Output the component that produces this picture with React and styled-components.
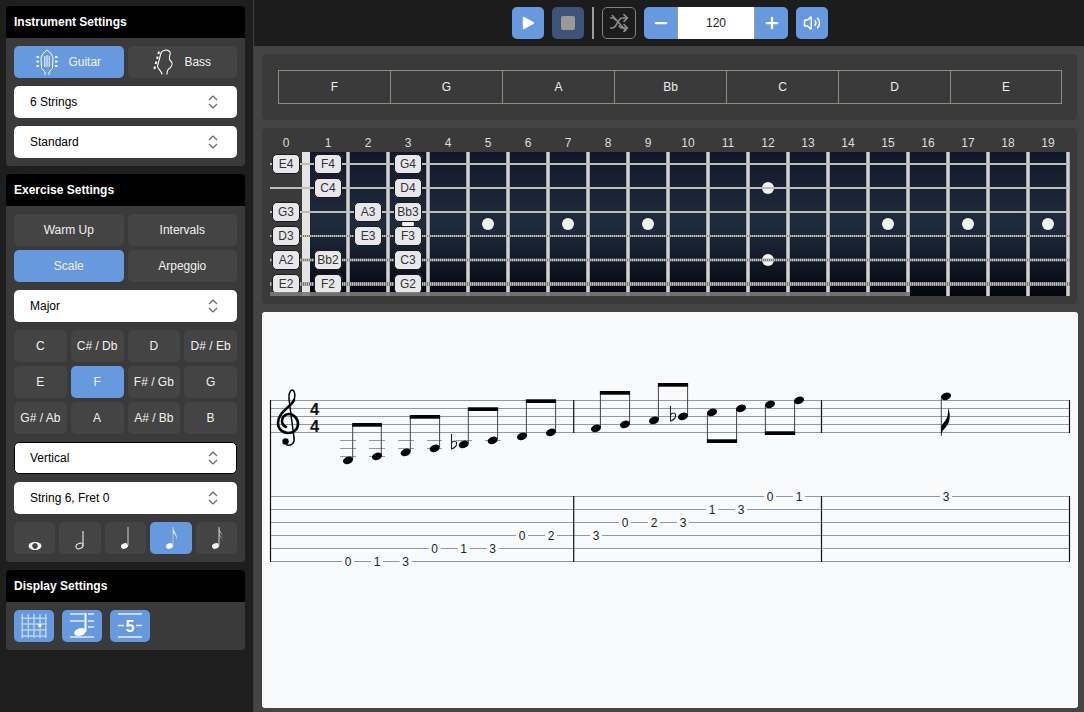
import styled, { createGlobalStyle } from 'styled-components';
import { ChevronsUpDown, Minus, Plus, Volume2 } from 'lucide-react';

const BLUE = '#6699dd';
const KEYS = ['C', 'C# / Db', 'D', 'D# / Eb', 'E', 'F', 'F# / Gb', 'G', 'G# / Ab', 'A', 'A# / Bb', 'B'];
const CHORDS = ['F', 'G', 'A', 'Bb', 'C', 'D', 'E'];
const FRETS = Array.from({ length: 20 }, (_, i) => i);
const WIRES = Array.from({ length: 19 }, (_, i) => 348 + i * 40);
const DOTS = [[408, 224], [488, 224], [568, 224], [648, 224], [768, 188], [768, 260], [888, 224], [968, 224], [1048, 224]];
const FRET_NOTES = [
  ['E4', 1, 0], ['F4', 1, 1], ['G4', 1, 3],
  ['C4', 2, 1], ['D4', 2, 3],
  ['G3', 3, 0], ['A3', 3, 2], ['Bb3', 3, 3],
  ['D3', 4, 0], ['E3', 4, 2], ['F3', 4, 3],
  ['A2', 5, 0], ['Bb2', 5, 1], ['C3', 5, 3],
  ['E2', 6, 0], ['F2', 6, 1], ['G2', 6, 3],
];

const STAFF_LINES = [400.5, 408.5, 416.5, 424.5, 432.5];
const TAB_LINES = [496.5, 509.5, 522.5, 535.5, 548.5, 561.5];
const BARS = [573.7, 821.5, 1069.5];
const HEADS = [
  [348, 460.3], [377, 456.3], [405.7, 452.3], [434.7, 448.3], [463.7, 444.3], [492.7, 440.3], [522, 436.3], [551, 432.3],
  [596, 428.3], [625, 424.3], [654, 420.3], [683, 416.3], [712, 412.3], [741, 408.3], [770, 404.3], [799, 400.3], [946, 396.3],
];
// x of both stems, y of beam top, stem ends measured from the heads
const BEAMS = [
  { a: 352.7, b: 381.3, y: 423, ya: 459, yb: 455 },
  { a: 410.3, b: 439.6, y: 415, ya: 451, yb: 447 },
  { a: 468.3, b: 497.6, y: 407.3, ya: 443, yb: 439 },
  { a: 526.4, b: 555.6, y: 399.3, ya: 435, yb: 431 },
  { a: 600.4, b: 629.6, y: 391, ya: 427, yb: 423 },
  { a: 658.4, b: 687.6, y: 383, ya: 419, yb: 415 },
  { a: 707.4, b: 736.6, y: 439.3, ya: 413, yb: 409 },
  { a: 765.4, b: 794.6, y: 431.3, ya: 405, yb: 401 },
];
const LEDGERS = [
  [340, 356, 440.5], [340, 356, 448.5], [340, 356, 456.5],
  [369, 385, 440.5], [369, 385, 448.5], [369, 385, 456.5],
  [398, 414, 440.5], [398, 414, 448.5],
  [427, 442, 440.5], [427, 442, 448.5],
  [456, 472, 440.5], [485, 501, 440.5],
];
const TAB_NUMBERS = [
  [348, 561.5, 0], [377, 561.5, 1], [405.7, 561.5, 3],
  [434.7, 548.5, 0], [463.7, 548.5, 1], [492.7, 548.5, 3],
  [522, 535.5, 0], [551, 535.5, 2], [596, 535.5, 3],
  [625, 522.5, 0], [654, 522.5, 2], [683, 522.5, 3],
  [712, 509.5, 1], [741, 509.5, 3],
  [770, 496.5, 0], [799, 496.5, 1], [946, 496.5, 3],
];

const GlobalStyle = createGlobalStyle`
  html, body, #root {
    height: 100%;
    margin: 0;
  }
  body {
    overflow: hidden;
    font-family: "Liberation Sans", Arial, sans-serif;
    font-size: 12px;
    background: #1e1e1e;
  }
`;

const Layout = styled.div`
  height: 100%;
  display: flex;
`;

const Sidebar = styled.aside`
  width: 254px;
  flex-shrink: 0;
  box-sizing: border-box;
  padding: 6px 8px 0 6px;
  display: flex;
  flex-direction: column;
  gap: 8px;
  background: #1e1e1e;
  border-right: 1px solid #33414f;
`;

const Panel = styled.section`
  background: #3a3a3a;
  border-radius: 4px;
  overflow: hidden;
`;

const PanelHeader = styled.h2`
  margin: 0;
  height: 32px;
  padding: 0 8px;
  display: flex;
  align-items: center;
  background: #000;
  color: #fff;
  font-size: 12px;
  font-weight: bold;
`;

const PanelBody = styled.div`
  padding: 8px;
  display: flex;
  flex-direction: column;
  gap: 8px;
`;

const ButtonStack = styled.div`
  display: flex;
  flex-direction: column;
  gap: 4px;
`;

const Grid = styled.div`
  display: grid;
  grid-template-columns: repeat(${(p) => p.$cols}, 1fr);
  gap: 4px;
`;

const ToggleButton = styled.button`
  height: 32px;
  padding: 0;
  border: none;
  border-radius: 5px;
  display: flex;
  align-items: center;
  justify-content: center;
  gap: ${(p) => p.$gap || 0}px;
  background: ${(p) => (p.$active ? BLUE : '#444')};
  color: #f2f2f2;
  font-family: inherit;
  font-size: 12px;
`;

const IconRow = styled.div`
  display: flex;
  gap: 8px;
`;

const DisplayButton = styled(ToggleButton)`
  width: 40px;
`;

const SelectBox = styled.div`
  position: relative;
  height: 32px;
  & svg {
    position: absolute;
    top: 7px;
    right: 15px;
    color: #666;
    pointer-events: none;
  }
`;

const Select = styled.select`
  width: 100%;
  height: 100%;
  padding: 0 0 0 15px;
  appearance: none;
  box-sizing: border-box;
  border: 1px solid ${(p) => (p.$focused ? '#000' : 'transparent')};
  border-radius: 5px;
  background: #fff;
  color: #000;
  font-family: inherit;
  font-size: 12px;
`;

const Main = styled.main`
  flex: 1;
  min-width: 0;
  display: flex;
  flex-direction: column;
  background: #444;
`;

const Toolbar = styled.header`
  height: 46px;
  flex-shrink: 0;
  box-sizing: border-box;
  padding-left: 2px;
  display: flex;
  align-items: center;
  justify-content: center;
  gap: 8px;
  background: #1c1c1c;
`;

const ToolButton = styled.button`
  width: 32px;
  height: 32px;
  padding: 0;
  border: none;
  border-radius: 5px;
  display: flex;
  align-items: center;
  justify-content: center;
  background: ${(p) => (p.$dim ? '#3c5478' : BLUE)};
  color: #fff;
`;

const StopSquare = styled.span`
  width: 14px;
  height: 14px;
  border-radius: 2px;
  background: #999;
`;

const Divider = styled.span`
  width: 2px;
  height: 32px;
  background: #9c9c9c;
`;

const LoopButton = styled(ToolButton)`
  width: 34px;
  background: transparent;
  border: 1px solid #808080;
  color: #8c8c8c;
`;

const TempoGroup = styled.div`
  display: flex;
  width: 144px;
  height: 32px;
  border-radius: 5px;
  overflow: hidden;
  background: ${BLUE};
`;

const TempoStep = styled.button`
  flex: 1;
  padding: 0;
  border: none;
  display: flex;
  align-items: center;
  justify-content: center;
  background: transparent;
  color: #fff;
`;

const TempoInput = styled.input`
  width: 78px;
  box-sizing: border-box;
  padding: 0;
  border: none;
  border-left: 1px solid #999;
  border-right: 1px solid #999;
  background: #fff;
  color: #222;
  text-align: center;
  font-family: inherit;
  font-size: 12px;
`;

const Content = styled.div`
  flex: 1;
  min-height: 0;
  padding: 8px 6px 4px 8px;
  display: flex;
  flex-direction: column;
  gap: 8px;
`;

const ChordPanel = styled.section`
  margin-right: 1px;
  padding: 16px;
  background: #3a3a3a;
  border-radius: 4px;
`;

const ChordGrid = styled.div`
  width: 784px;
  height: 34px;
  box-sizing: border-box;
  display: grid;
  grid-template-columns: repeat(7, 112px);
  border-top: 1px solid #8f8f78;
  border-bottom: 1px solid #8f8f78;
`;

const ChordCell = styled.div`
  box-sizing: border-box;
  display: flex;
  align-items: center;
  justify-content: center;
  color: #eee;
  font-size: 12px;
  border-left: 1px solid #8f8f78;
  &:last-child {
    border-right: 1px solid #8f8f78;
  }
`;

const FretPanel = styled.section`
  margin-right: 1px;
  padding: 8px 7px 8px 8px;
  background: #3a3a3a;
  border-radius: 4px;
`;

const fretColumns = '32px 6px repeat(19, 40px)';

const FretLabels = styled.div`
  height: 16px;
  display: grid;
  grid-template-columns: ${fretColumns};
`;

const FretLabel = styled.span`
  grid-column: ${(p) => (p.$fret === 0 ? 1 : p.$fret + 2)};
  grid-row: 1;
  text-align: center;
  color: #ddd;
  font-size: 12px;
  line-height: 14px;
`;

const Board = styled.div`
  position: relative;
  width: 800px;
  height: 144px;
  overflow: hidden;
`;

const BoardArt = styled.svg`
  position: absolute;
  inset: 0;
  display: block;
`;

const NoteGrid = styled.div`
  position: relative;
  display: grid;
  grid-template-columns: ${fretColumns};
  grid-template-rows: repeat(6, 24px);
`;

const NotePill = styled.div`
  grid-row: ${(p) => p.$row};
  grid-column: ${(p) => (p.$fret === 0 ? 1 : p.$fret + 2)};
  justify-self: center;
  align-self: center;
  width: 28px;
  height: 20px;
  box-sizing: border-box;
  display: flex;
  align-items: center;
  justify-content: center;
  border: 1px solid #1a1a1a;
  border-radius: 5px;
  background: #e8e8ec;
  color: #333;
  font-size: 12px;
`;

const ScrollThumb = styled.div`
  position: absolute;
  left: 0;
  bottom: 0;
  width: 640px;
  height: 4px;
  background: rgba(122, 122, 122, 0.92);
`;

const Sheet = styled.section`
  flex: 1;
  min-height: 0;
  background: #f9fafc;
  border-radius: 3px;
  overflow: hidden;
`;

const SheetArt = styled.svg`
  display: block;
  width: 100%;
  height: 100%;
`;

const TabDigit = styled.text`
  font-family: "Liberation Sans", Arial, sans-serif;
  font-size: 12px;
  fill: #222;
  text-anchor: middle;
`;

const TimeDigit = styled.text`
  font-family: "Liberation Sans", Arial, sans-serif;
  font-weight: bold;
  font-size: 16.5px;
  fill: #111;
  text-anchor: middle;
`;

const IconDigit = styled.text`
  font-family: "Liberation Sans", Arial, sans-serif;
  font-weight: bold;
  font-size: 16px;
  fill: #fff;
  text-anchor: middle;
`;

const PickSelect = ({ value, focused }) => (
  <SelectBox>
    <Select defaultValue={value} $focused={focused}>
      <option>{value}</option>
    </Select>
    <ChevronsUpDown size={18} strokeWidth={1.5} />
  </SelectBox>
);

const GuitarIcon = () => (
  <svg width="22" height="26" viewBox="0 0 22 26" fill="none" stroke="#fff" strokeWidth="1" strokeLinecap="round">
    <path d="M9 25.5V23L5.6 19.5 5 8.5 7 4.5 11 1l4 3.5 2 4-.6 11L13 23v2.500" />
    <path d="M8.800 7.500v10M11 6.500v11M13.200 7.500v10" />
    <path strokeWidth="2" strokeLinecap="butt" d="M0.500 8h2.400M0.500 12.500h2.400M0.500 17h2.400M19.100 8h2.400M19.100 12.500h2.400M19.100 17h2.400" />
  </svg>
);

const BassIcon = () => (
  <svg width="20" height="26" viewBox="0 0 20 26" fill="none" stroke="#fff" strokeWidth="1.100" strokeLinecap="round">
    <path d="M8 4C9 1 15 0 17 3c1 3-2 6 0 8 3 3 3 5 0 8-2 1-3 3-3 6M8 4 4.500 17c0 3 3.500 4 4.500 8" />
    <path strokeWidth="2" strokeLinecap="butt" d="M6 2.500l-.6 2.400M4.700 7.500l-.6 2.400M3.300 12.500l-.6 2.400M2 17.500l-.6 2.400" />
  </svg>
);

// Whole, half, quarter, eighth and sixteenth note, all on one baseline
const NoteIcon = ({ kind }) => {
  const hollow = kind === 'half';
  return (
    <svg width="41" height="32" viewBox="0 0 41 32">
      {kind === 'whole' ? (
        <>
          <ellipse cx="21" cy="24" rx="6.500" ry="4" fill="#fff" />
          <ellipse cx="21" cy="24" rx="2.800" ry="2.700" fill="#444" transform="rotate(50 21 24)" />
        </>
      ) : (
        <>
          <ellipse cx="19.500" cy="24" rx="3.600" ry="2.600" transform="rotate(-22 19.500 24)"
            fill={hollow ? 'none' : '#fff'} stroke="#fff" strokeWidth={hollow ? 1 : 0} />
          <path d={`M23 23.500V${hollow ? 9 : 5}`} stroke={hollow ? '#ddd' : '#bbb'} strokeWidth="1.200" />
        </>
      )}
      {kind === 'eighth' && <path d="M23 5c0 4 5 7 4 14 0-4-2-7-4-8z" fill="#d8e4f6" />}
      {kind === 'sixteenth' && <path d="M23 5c0 4 4 6 3.500 11 0-3-1.500-5-3.500-6zM23 10c0 4 4 5 3.500 10 0-3-1.500-5-3.500-6z" fill="#bbb" />}
    </svg>
  );
};

const FretboardIcon = () => (
  <svg width="40" height="32" viewBox="0 0 40 32" stroke="rgba(255,255,255,0.55)" strokeWidth="1.500">
    <path d="M8.300 4v24M14.300 4v24M20 4v24M26 4v24M31.700 4v24M7 8.300h26M7 14h26M7 20h26M7 26h26" fill="none" />
    <rect x="24.300" y="14" width="3" height="3" fill="#fff" stroke="none" />
  </svg>
);

const StaffIcon = () => (
  <svg width="40" height="32" viewBox="0 0 40 32" stroke="#fff" strokeWidth="1.300" fill="none">
    <path d="M8 4h14M26 4h6M8 11h14M26 11h6M26 17h6M8 27h24" stroke="rgba(255,255,255,0.8)" />
    <ellipse cx="18" cy="22" rx="6" ry="3.800" fill="#fff" stroke="none" transform="rotate(-18 18 22)" />
    <path d="M23.500 22V3" strokeWidth="2" />
  </svg>
);

const TabIcon = () => (
  <svg width="40" height="32" viewBox="0 0 40 32" stroke="rgba(255,255,255,0.85)" strokeWidth="1.300" fill="none">
    <path d="M8 4h24M8 27h24M8 15.500h6M26 15.500h6" />
    <IconDigit x="20" y="21.500" stroke="none">5</IconDigit>
  </svg>
);

const PlayIcon = () => (
  <svg width="16" height="16" viewBox="0 0 16 16">
    <path d="M3.500 2.500 13.500 8 3.500 13.500z" fill="#fff" stroke="#fff" strokeWidth="1.500" strokeLinejoin="round" />
  </svg>
);

const NoLoopIcon = () => (
  <svg width="20" height="20" viewBox="0 0 24 24" fill="none" stroke="currentColor" strokeWidth="2" strokeLinecap="round" strokeLinejoin="round">
    <path d="m18 14 4 4-4 4M18 2l4 4-4 4" />
    <path d="M2 18h2a4 4 0 0 0 3.300-1.700l5.400-8.600A4 4 0 0 1 16 6h6" />
    <path d="M2 6h2a4 4 0 0 1 3.600 2.200M22 18h-6a4 4 0 0 1-3.300-1.800l-.4-.4" />
    <path d="M4 3l16 18" />
  </svg>
);

const BoardDrawing = () => (
  <BoardArt width="800" height="144" viewBox="270 152 800 144">
    <defs>
      <linearGradient id="wood" x1="0" y1="0" x2="0" y2="1">
        <stop offset="0" stopColor="#121829" />
        <stop offset="0.5" stopColor="#1f2b3d" />
        <stop offset="0.72" stopColor="#141c2b" />
        <stop offset="1" stopColor="#03050c" />
      </linearGradient>
      <linearGradient id="wire" x1="0" y1="0" x2="1" y2="0">
        <stop offset="0" stopColor="#8c8c8c" />
        <stop offset="0.5" stopColor="#ececec" />
        <stop offset="1" stopColor="#8c8c8c" />
      </linearGradient>
    </defs>
    <rect x="310" y="152" width="760" height="144" fill="url(#wood)" />
    <rect x="302" y="152" width="8" height="144" fill="#e4e4e0" />
    {WIRES.map((x) => (
      <rect key={x} x={x - 2} y="152" width="4" height="144" fill="url(#wire)" />
    ))}
    {DOTS.map(([x, y]) => (
      <circle key={`${x}-${y}`} cx={x} cy={y} r="6" fill="#f2f2f2" />
    ))}
    <path d="M270 164H1070M270 188H1070M270 212H1070" stroke="#bdbdbd" strokeWidth="2" />
    <path d="M270 236H1070" stroke="#777" strokeWidth="2" />
    <path d="M270 236H1070" stroke="#c2c2c2" strokeWidth="2" strokeDasharray="1 1" />
    <path d="M270 260H1070" stroke="#777" strokeWidth="2.500" />
    <path d="M270 260H1070" stroke="#c2c2c2" strokeWidth="2.500" strokeDasharray="1 1" />
    <path d="M270 284H1070" stroke="#707070" strokeWidth="3.500" />
    <path d="M270 284H1070" stroke="#bebebe" strokeWidth="3.500" strokeDasharray="1 1" />
  </BoardArt>
);

const Flat = ({ x, y }) => (
  <path d={`M${x} ${y}v15c3-1 5.500-3.500 5-6.500-.5-2-3-2-5 .5`} fill="none" stroke="#222" strokeWidth="1.100" />
);

const TrebleClef = () => (
  <g fill="none" stroke="#000" strokeLinecap="round">
    <path strokeWidth="1.500" d="M294 438 289 399C288.500 394 290 390 292.500 390 295 391 295.500 396 294 400" />
    <path strokeWidth="2.600" d="M294 400C292 406 278 412 278 423 278 430 284 433 288 433 294 433 298 429 298 424 298 418 293 414 289 414 284 414 282 418 282 421 282 424 284 426 286 427" />
    <path strokeWidth="1.500" d="M294 438C295 444 290 446 287 445" />
    <circle cx="285.500" cy="441.500" r="3.200" fill="#000" stroke="none" />
  </g>
);

const NotationDrawing = () => (
  <SheetArt viewBox="262 312 816 396">
    <g stroke="#8f9aa8" strokeWidth="1">
      {STAFF_LINES.map((y) => <line key={y} x1="270" x2="1070" y1={y} y2={y} />)}
      {TAB_LINES.map((y) => <line key={y} x1="270" x2="1070" y1={y} y2={y} />)}
      {LEDGERS.map(([a, b, y]) => <line key={`${a}-${y}`} x1={a} x2={b} y1={y} y2={y} />)}
    </g>
    <g stroke="#111" strokeWidth="1.200">
      <line x1="270.500" x2="270.500" y1="400" y2="562" />
      {BARS.map((x) => (
        <g key={x}>
          <line x1={x} x2={x} y1="400" y2="433" />
          <line x1={x} x2={x} y1="496" y2="562" />
        </g>
      ))}
    </g>
    <TrebleClef />
    <TimeDigit x="314.500" y="415">4</TimeDigit>
    <TimeDigit x="314.500" y="432">4</TimeDigit>
    {BEAMS.map(({ a, b, y, ya, yb }) => (
      <g key={a}>
        <line x1={a} x2={a} y1={ya} y2={y + 2} stroke="#444" strokeWidth="1" />
        <line x1={b} x2={b} y1={yb} y2={y + 2} stroke="#444" strokeWidth="1" />
        <rect x={a - 0.5} y={y} width={b - a + 1} height="3.700" fill="#000" />
      </g>
    ))}
    {HEADS.map(([x, y]) => (
      <ellipse key={x} cx={x} cy={y} rx="5.200" ry="3.600" fill="#000" transform={`rotate(-20 ${x} ${y})`} />
    ))}
    <Flat x={451.500} y={434} />
    <Flat x={670.500} y={406} />
    <line x1="941.300" x2="941.300" y1="397" y2="436" stroke="#444" strokeWidth="1" />
    <path d="M941 435C942 430 946 428 948.500 423 950.500 418 950 412 948 408 948.500 413 947.500 418 945 421 943.500 423 941.500 425 941 427z" fill="#000" />
    {TAB_NUMBERS.map(([x, y, n]) => (
      <g key={x}>
        <rect x={x - 6} y={y - 4} width="12" height="8" fill="#f9fafc" />
        <TabDigit x={x} y={y + 4}>{n}</TabDigit>
      </g>
    ))}
  </SheetArt>
);

const App = () => (
  <>
    <GlobalStyle />
    <Layout>
      <Sidebar>
        <Panel>
          <PanelHeader>Instrument Settings</PanelHeader>
          <PanelBody>
            <Grid $cols={2}>
              <ToggleButton $active $gap={10}><GuitarIcon />Guitar</ToggleButton>
              <ToggleButton $gap={11}><BassIcon />Bass</ToggleButton>
            </Grid>
            <PickSelect value="6 Strings" />
            <PickSelect value="Standard" />
          </PanelBody>
        </Panel>

        <Panel>
          <PanelHeader>Exercise Settings</PanelHeader>
          <PanelBody>
            <ButtonStack>
              <Grid $cols={2}>
                <ToggleButton>Warm Up</ToggleButton>
                <ToggleButton>Intervals</ToggleButton>
              </Grid>
              <Grid $cols={2}>
                <ToggleButton $active>Scale</ToggleButton>
                <ToggleButton>Arpeggio</ToggleButton>
              </Grid>
            </ButtonStack>
            <PickSelect value="Major" />
            <Grid $cols={4}>
              {KEYS.map((key) => (
                <ToggleButton key={key} $active={key === 'F'}>{key}</ToggleButton>
              ))}
            </Grid>
            <PickSelect value="Vertical" focused />
            <PickSelect value="String 6, Fret 0" />
            <Grid $cols={5}>
              {['whole', 'half', 'quarter', 'eighth', 'sixteenth'].map((kind) => (
                <ToggleButton key={kind} $active={kind === 'eighth'}><NoteIcon kind={kind} /></ToggleButton>
              ))}
            </Grid>
          </PanelBody>
        </Panel>

        <Panel>
          <PanelHeader>Display Settings</PanelHeader>
          <PanelBody>
            <IconRow>
              <DisplayButton $active><FretboardIcon /></DisplayButton>
              <DisplayButton $active><StaffIcon /></DisplayButton>
              <DisplayButton $active><TabIcon /></DisplayButton>
            </IconRow>
          </PanelBody>
        </Panel>
      </Sidebar>

      <Main>
        <Toolbar>
          <ToolButton><PlayIcon /></ToolButton>
          <ToolButton $dim><StopSquare /></ToolButton>
          <Divider />
          <LoopButton><NoLoopIcon /></LoopButton>
          <TempoGroup>
            <TempoStep><Minus size={18} strokeWidth={3} /></TempoStep>
            <TempoInput defaultValue="120" />
            <TempoStep><Plus size={18} strokeWidth={3} /></TempoStep>
          </TempoGroup>
          <ToolButton><Volume2 size={18} strokeWidth={2} /></ToolButton>
        </Toolbar>

        <Content>
          <ChordPanel>
            <ChordGrid>
              {CHORDS.map((chord) => (
                <ChordCell key={chord}>{chord}</ChordCell>
              ))}
            </ChordGrid>
          </ChordPanel>

          <FretPanel>
            <FretLabels>
              {FRETS.map((fret) => (
                <FretLabel key={fret} $fret={fret}>{fret}</FretLabel>
              ))}
            </FretLabels>
            <Board>
              <BoardDrawing />
              <NoteGrid>
                {FRET_NOTES.map(([name, row, fret]) => (
                  <NotePill key={name} $row={row} $fret={fret}>{name}</NotePill>
                ))}
              </NoteGrid>
              <ScrollThumb />
            </Board>
          </FretPanel>

          <Sheet>
            <NotationDrawing />
          </Sheet>
        </Content>
      </Main>
    </Layout>
  </>
);

export default App;
